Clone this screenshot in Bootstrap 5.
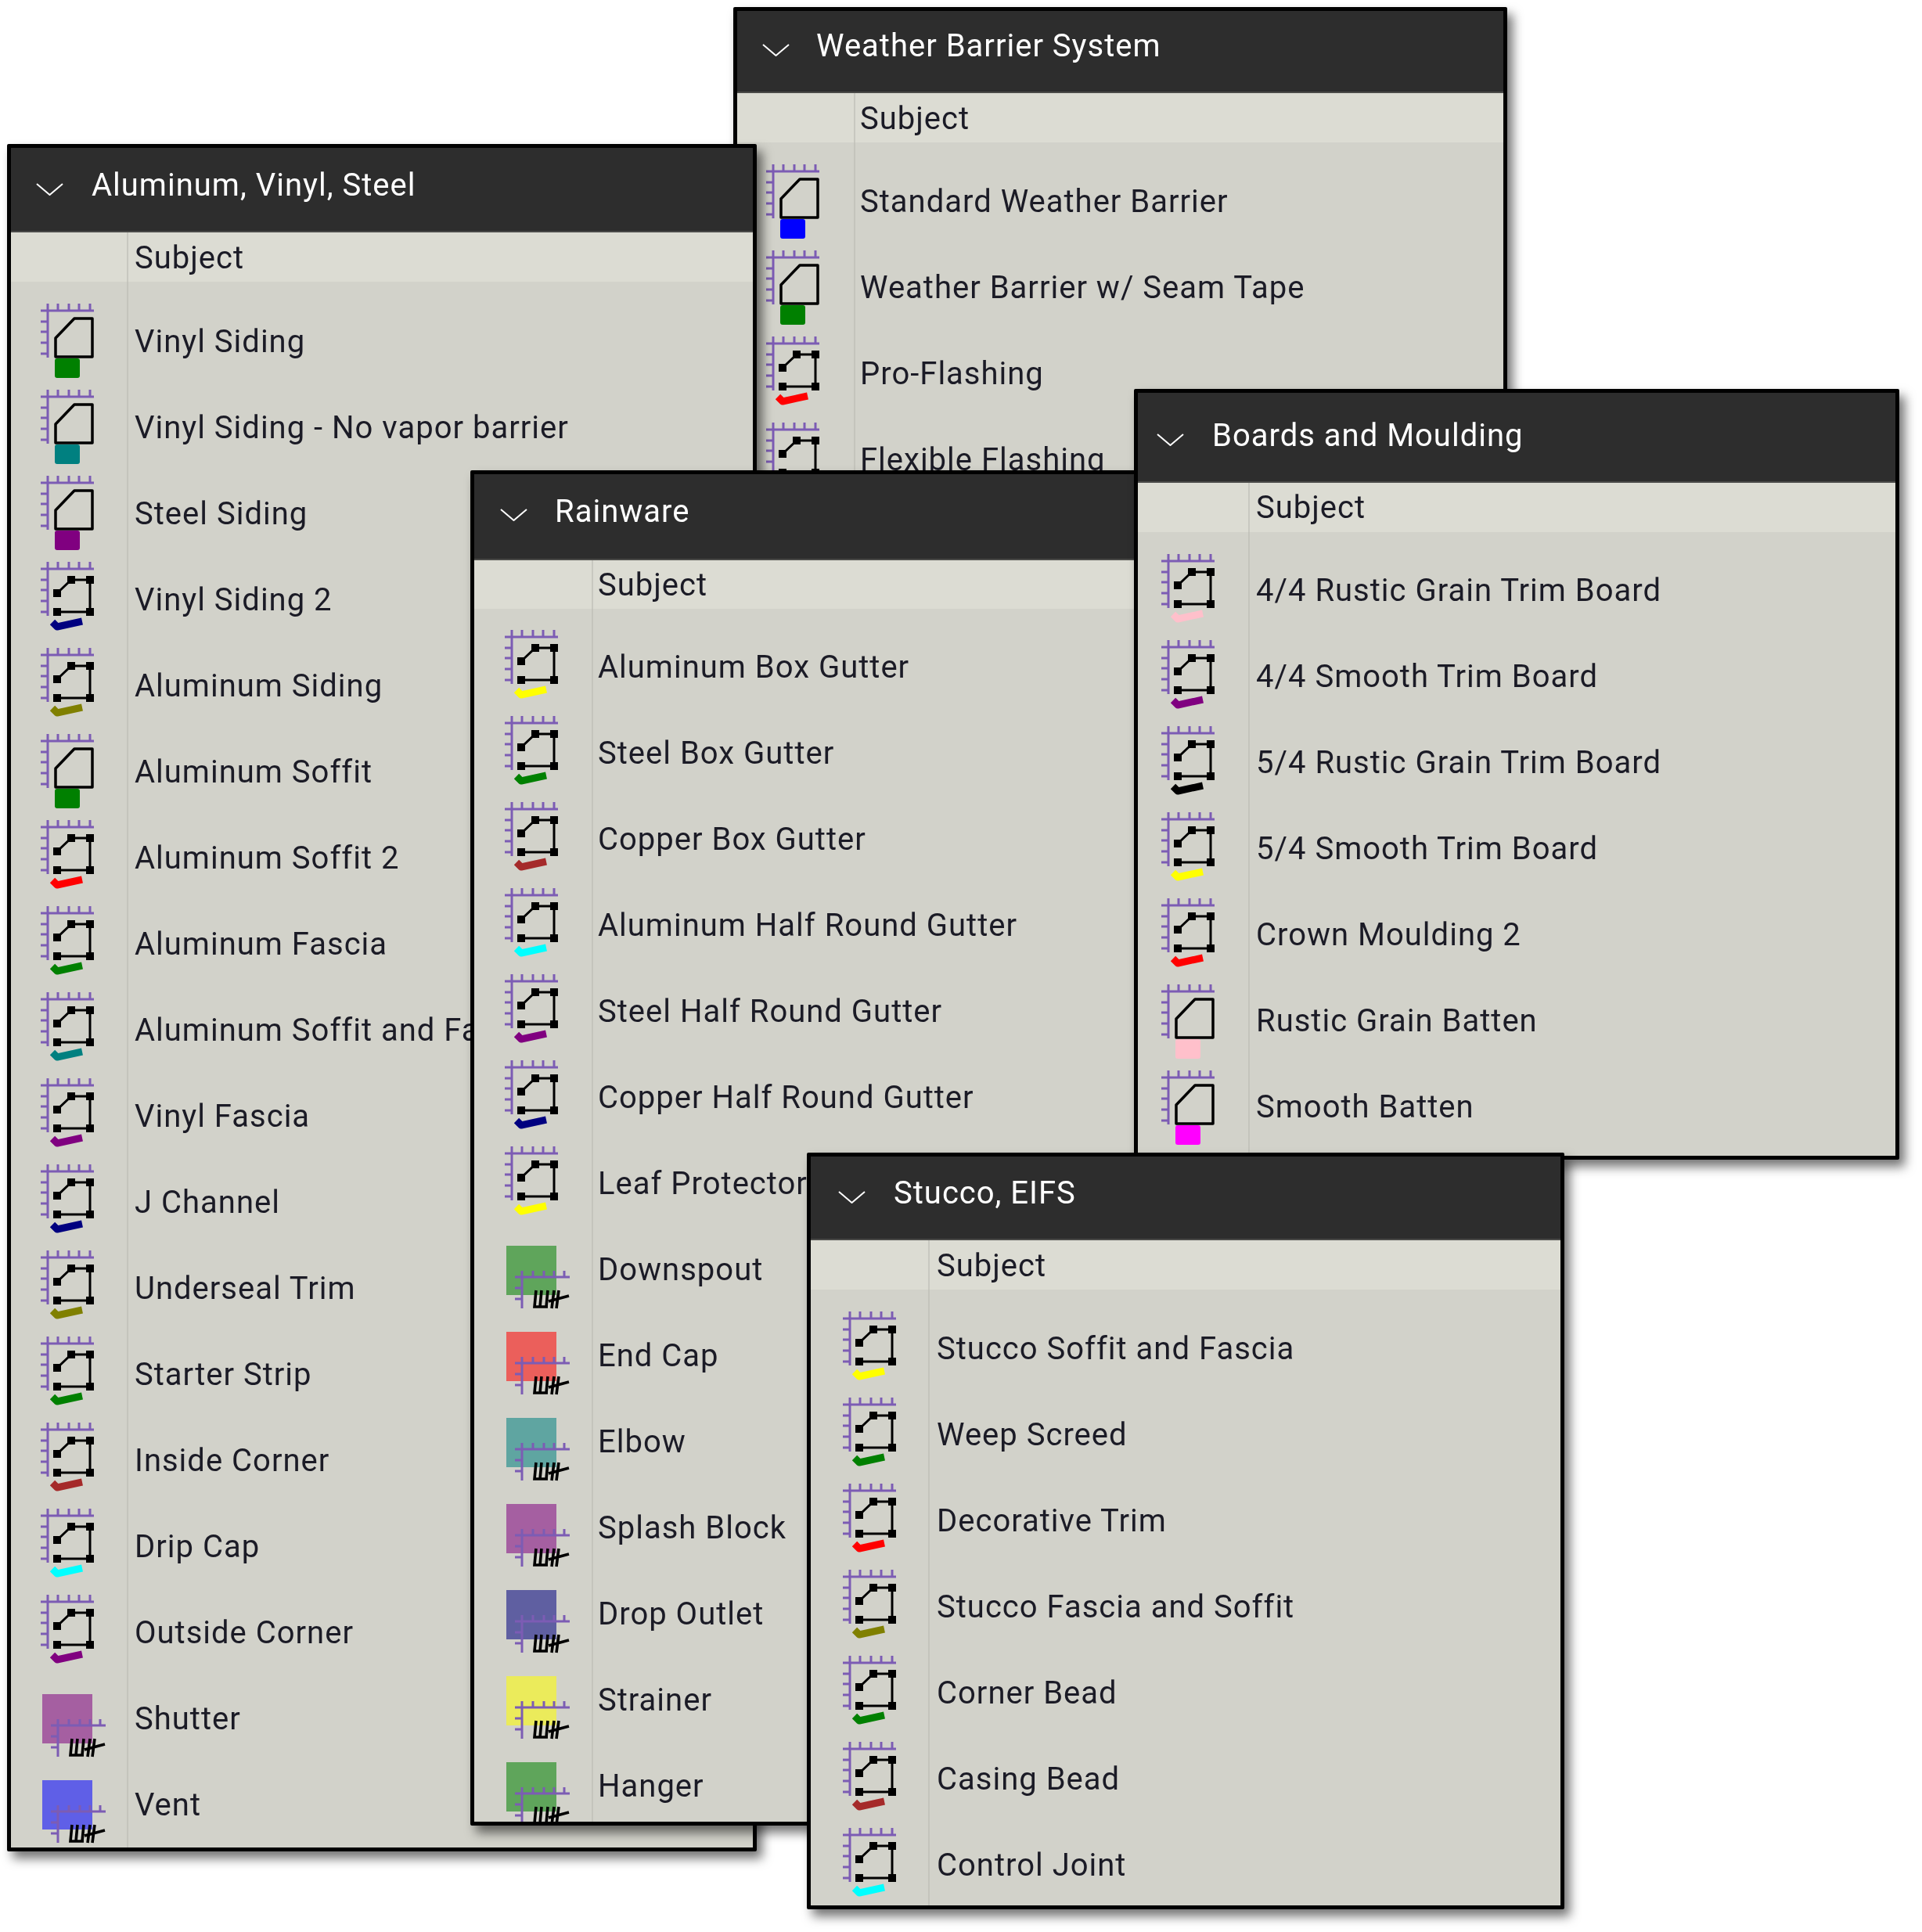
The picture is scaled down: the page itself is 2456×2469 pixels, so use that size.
<!DOCTYPE html>
<html lang="en">
<head>
    <meta charset="UTF-8">
    <title>Tool Sets</title>
    <link href="https://cdn.jsdelivr.net/npm/bootstrap@5.3.0/dist/css/bootstrap.min.css" rel="stylesheet">
    <style>
        body {
            margin: 0;
            background-color: #fff;
            font-family: Roboto, "Liberation Sans", sans-serif;
        }

        .desk {
            position: relative;
            width: 2456px;
            height: 2469px;
            overflow: hidden;
        }

        /* floating tool chest windows */
        .win {
            position: absolute;
            border: 5px solid #000;
            border-radius: 2px;
            background-color: #d2d2ca;
            box-shadow: 7px 9px 14px rgba(0, 0, 0, 0.55);
            overflow: hidden;
            filter: blur(0.5px);
            letter-spacing: 1px;
        }

        .win-weather { left: 937px; top: 9px; width: 989px; height: 700px; --head: 105px; --cols: 63px; --subj: 65px; --ltop: 19px; --drop: 3px; --gut: 149px; --pad: 37px; --hpad: 32px; --hgap: 34px; --hbot: 13px; --tpad: 6px; }
        .win-siding { left: 9px; top: 184px; width: 958px; height: 2182px; --head: 108px; --cols: 63px; --subj: 66px; --ltop: 19px; --drop: 5px; --gut: 148px; --pad: 38px; --hpad: 32px; --hgap: 36px; --hbot: 10px; --tpad: 8px; }
        .win-rain { left: 601px; top: 601px; width: 1000px; height: 1732px; --head: 110px; --cols: 62px; --subj: 64px; --ltop: 18px; --drop: 3px; --gut: 150px; --pad: 39px; --hpad: 33px; --hgap: 35px; --hbot: 13px; --tpad: 6px; }
        .win-boards { left: 1449px; top: 497px; width: 978px; height: 985px; --head: 115px; --cols: 63px; --subj: 64px; --ltop: 19px; --drop: 2px; --gut: 141px; --pad: 30px; --hpad: 24px; --hgap: 36px; --hbot: 3px; --tpad: 8px; }
        .win-stucco { left: 1031px; top: 1473px; width: 968px; height: 967px; --head: 107px; --cols: 63px; --subj: 66px; --ltop: 19px; --drop: 3px; --gut: 150px; --pad: 41px; --hpad: 35px; --hgap: 36px; --hbot: 11px; --tpad: 9px; }

        .win-head {
            height: var(--head);
            flex: none;
            padding: 0 0 var(--hbot) var(--hpad);
            background-color: #2d2d2d;
            border-bottom: 2px solid #4a4a48;
            color: #fff;
            font-size: 40px;
            line-height: 1;
            gap: var(--hgap);
        }

        .win-head svg {
            width: 35px;
            height: 16px;
            margin-top: 9px;
        }

        .win-cols {
            height: var(--cols);
            flex: none;
            background-color: #dcdcd3;
            color: #1b1b26;
            font-size: 40px;
            line-height: var(--subj);
        }

        .win-cols > div:first-child,
        .win-row > div:first-child {
            width: calc(var(--gut) + 2px);
            flex: none;
        }

        .win-cols > div:first-child {
            border-right: 2px solid #c8c8c0;
        }

        .win-cols > div:last-child,
        .win-row > div:last-child {
            padding-left: var(--tpad);
        }

        .win-list {
            padding-top: var(--ltop);
            background: linear-gradient(#c4c4bc, #c4c4bc) no-repeat var(--gut) 0 / 2px 100%, #d2d2ca;
            color: #1b1b26;
            font-size: 40px;
        }

        .win-row {
            height: 110px;
            flex: none;
            white-space: nowrap;
        }

        .win-row > div:first-child {
            padding: 7px 0 0 var(--pad);
        }

        .win-row > div:last-child {
            padding-top: var(--drop);
        }

        .tool-ico {
            display: block;
            width: 90px;
            height: 100px;
            overflow: visible;
        }

        .c-green { color: #008000; }
        .c-teal { color: #008080; }
        .c-purple { color: #800080; }
        .c-navy { color: #000080; }
        .c-olive { color: #808000; }
        .c-red { color: #ff0000; }
        .c-brown { color: #a52a2a; }
        .c-cyan { color: #00ffff; }
        .c-blue { color: #0000ff; }
        .c-yellow { color: #ffff00; }
        .c-pink { color: #ffc0cb; }
        .c-magenta { color: #ff00ff; }
        .c-black { color: #000; }
    </style>
</head>
<body>

    <!-- shared icons, colour comes from currentColor -->
    <svg width="0" height="0" class="position-absolute">
        <defs>
            <symbol id="ruler" overflow="visible">
                <path d="M0 9H68M9 0V69M22 0V9M36 0V9M49 0V9M63 0V9M0 23H9M0 36H9M0 50H9M0 64H9" fill="none" stroke="#7c5cb4" stroke-width="3"/>
            </symbol>
            <symbol id="ico-block" viewBox="0 0 90 100">
                <use href="#ruler"/>
                <rect x="18" y="70" width="32" height="25" rx="3" fill="currentColor"/>
                <path d="M19 44L43 19H66V68H19Z" fill="none" stroke="#000" stroke-width="3.5" stroke-linejoin="round"/>
            </symbol>
            <symbol id="ico-node" viewBox="0 0 90 100">
                <use href="#ruler"/>
                <path d="M15 77L21 83L53 76" fill="none" stroke="currentColor" stroke-width="9" stroke-linejoin="round"/>
                <path d="M21 40L39 23H63V64H21" fill="none" stroke="#000" stroke-width="3"/>
                <path d="M16 35h10v10h-10zM34 18h10v10h-10zM58 18h10v10h-10zM58 59h10v10h-10zM16 59h10v10h-10z" fill="#000"/>
            </symbol>
            <symbol id="ico-hatch" viewBox="0 0 90 100">
                <rect x="2" y="17" width="64" height="63" fill="currentColor" opacity="0.55"/>
                <path d="M13 57H83M22 49V97M36 49V57M50 49V57M63 49V57M76 49V57M13 71H22M13 85H22" fill="none" stroke="#7c5cb4" stroke-width="3"/>
                <path d="M40 74L38 95H55M47 74L45 95M55 74L53 95M63 74L60 97M69 74L66 97M56 88L82 81" fill="none" stroke="#000" stroke-width="3.6"/>
            </symbol>
        </defs>
    </svg>

    <div class="desk">

        <div class="win win-weather d-flex flex-column">
            <div class="win-head d-flex align-items-center">
                <svg viewBox="0 0 35 16"><polyline points="1,1 17.5,15 34,1" fill="none" stroke="#fff" stroke-width="2"/></svg>
                <span>Weather Barrier System</span>
            </div>
            <div class="win-cols d-flex"><div></div><div>Subject</div></div>
            <div class="win-list d-flex flex-column flex-grow-1">
                <div class="win-row d-flex align-items-center"><div class="c-blue"><svg class="tool-ico"><use href="#ico-block"/></svg></div><div>Standard Weather Barrier</div></div>
                <div class="win-row d-flex align-items-center"><div class="c-green"><svg class="tool-ico"><use href="#ico-block"/></svg></div><div>Weather Barrier w/ Seam Tape</div></div>
                <div class="win-row d-flex align-items-center"><div class="c-red"><svg class="tool-ico"><use href="#ico-node"/></svg></div><div>Pro-Flashing</div></div>
                <div class="win-row d-flex align-items-center"><div class="c-green"><svg class="tool-ico"><use href="#ico-node"/></svg></div><div>Flexible Flashing</div></div>
            </div>
        </div>

        <div class="win win-siding d-flex flex-column">
            <div class="win-head d-flex align-items-center">
                <svg viewBox="0 0 35 16"><polyline points="1,1 17.5,15 34,1" fill="none" stroke="#fff" stroke-width="2"/></svg>
                <span>Aluminum, Vinyl, Steel</span>
            </div>
            <div class="win-cols d-flex"><div></div><div>Subject</div></div>
            <div class="win-list d-flex flex-column flex-grow-1">
                <div class="win-row d-flex align-items-center"><div class="c-green"><svg class="tool-ico"><use href="#ico-block"/></svg></div><div>Vinyl Siding</div></div>
                <div class="win-row d-flex align-items-center"><div class="c-teal"><svg class="tool-ico"><use href="#ico-block"/></svg></div><div>Vinyl Siding - No vapor barrier</div></div>
                <div class="win-row d-flex align-items-center"><div class="c-purple"><svg class="tool-ico"><use href="#ico-block"/></svg></div><div>Steel Siding</div></div>
                <div class="win-row d-flex align-items-center"><div class="c-navy"><svg class="tool-ico"><use href="#ico-node"/></svg></div><div>Vinyl Siding 2</div></div>
                <div class="win-row d-flex align-items-center"><div class="c-olive"><svg class="tool-ico"><use href="#ico-node"/></svg></div><div>Aluminum Siding</div></div>
                <div class="win-row d-flex align-items-center"><div class="c-green"><svg class="tool-ico"><use href="#ico-block"/></svg></div><div>Aluminum Soffit</div></div>
                <div class="win-row d-flex align-items-center"><div class="c-red"><svg class="tool-ico"><use href="#ico-node"/></svg></div><div>Aluminum Soffit 2</div></div>
                <div class="win-row d-flex align-items-center"><div class="c-green"><svg class="tool-ico"><use href="#ico-node"/></svg></div><div>Aluminum Fascia</div></div>
                <div class="win-row d-flex align-items-center"><div class="c-teal"><svg class="tool-ico"><use href="#ico-node"/></svg></div><div>Aluminum Soffit and Fascia</div></div>
                <div class="win-row d-flex align-items-center"><div class="c-purple"><svg class="tool-ico"><use href="#ico-node"/></svg></div><div>Vinyl Fascia</div></div>
                <div class="win-row d-flex align-items-center"><div class="c-navy"><svg class="tool-ico"><use href="#ico-node"/></svg></div><div>J Channel</div></div>
                <div class="win-row d-flex align-items-center"><div class="c-olive"><svg class="tool-ico"><use href="#ico-node"/></svg></div><div>Underseal Trim</div></div>
                <div class="win-row d-flex align-items-center"><div class="c-green"><svg class="tool-ico"><use href="#ico-node"/></svg></div><div>Starter Strip</div></div>
                <div class="win-row d-flex align-items-center"><div class="c-brown"><svg class="tool-ico"><use href="#ico-node"/></svg></div><div>Inside Corner</div></div>
                <div class="win-row d-flex align-items-center"><div class="c-cyan"><svg class="tool-ico"><use href="#ico-node"/></svg></div><div>Drip Cap</div></div>
                <div class="win-row d-flex align-items-center"><div class="c-purple"><svg class="tool-ico"><use href="#ico-node"/></svg></div><div>Outside Corner</div></div>
                <div class="win-row d-flex align-items-center"><div class="c-purple"><svg class="tool-ico"><use href="#ico-hatch"/></svg></div><div>Shutter</div></div>
                <div class="win-row d-flex align-items-center"><div class="c-blue"><svg class="tool-ico"><use href="#ico-hatch"/></svg></div><div>Vent</div></div>
            </div>
        </div>

        <div class="win win-rain d-flex flex-column">
            <div class="win-head d-flex align-items-center">
                <svg viewBox="0 0 35 16"><polyline points="1,1 17.5,15 34,1" fill="none" stroke="#fff" stroke-width="2"/></svg>
                <span>Rainware</span>
            </div>
            <div class="win-cols d-flex"><div></div><div>Subject</div></div>
            <div class="win-list d-flex flex-column flex-grow-1">
                <div class="win-row d-flex align-items-center"><div class="c-yellow"><svg class="tool-ico"><use href="#ico-node"/></svg></div><div>Aluminum Box Gutter</div></div>
                <div class="win-row d-flex align-items-center"><div class="c-green"><svg class="tool-ico"><use href="#ico-node"/></svg></div><div>Steel Box Gutter</div></div>
                <div class="win-row d-flex align-items-center"><div class="c-brown"><svg class="tool-ico"><use href="#ico-node"/></svg></div><div>Copper Box Gutter</div></div>
                <div class="win-row d-flex align-items-center"><div class="c-cyan"><svg class="tool-ico"><use href="#ico-node"/></svg></div><div>Aluminum Half Round Gutter</div></div>
                <div class="win-row d-flex align-items-center"><div class="c-purple"><svg class="tool-ico"><use href="#ico-node"/></svg></div><div>Steel Half Round Gutter</div></div>
                <div class="win-row d-flex align-items-center"><div class="c-navy"><svg class="tool-ico"><use href="#ico-node"/></svg></div><div>Copper Half Round Gutter</div></div>
                <div class="win-row d-flex align-items-center"><div class="c-yellow"><svg class="tool-ico"><use href="#ico-node"/></svg></div><div>Leaf Protector</div></div>
                <div class="win-row d-flex align-items-center"><div class="c-green"><svg class="tool-ico"><use href="#ico-hatch"/></svg></div><div>Downspout</div></div>
                <div class="win-row d-flex align-items-center"><div class="c-red"><svg class="tool-ico"><use href="#ico-hatch"/></svg></div><div>End Cap</div></div>
                <div class="win-row d-flex align-items-center"><div class="c-teal"><svg class="tool-ico"><use href="#ico-hatch"/></svg></div><div>Elbow</div></div>
                <div class="win-row d-flex align-items-center"><div class="c-purple"><svg class="tool-ico"><use href="#ico-hatch"/></svg></div><div>Splash Block</div></div>
                <div class="win-row d-flex align-items-center"><div class="c-navy"><svg class="tool-ico"><use href="#ico-hatch"/></svg></div><div>Drop Outlet</div></div>
                <div class="win-row d-flex align-items-center"><div class="c-yellow"><svg class="tool-ico"><use href="#ico-hatch"/></svg></div><div>Strainer</div></div>
                <div class="win-row d-flex align-items-center"><div class="c-green"><svg class="tool-ico"><use href="#ico-hatch"/></svg></div><div>Hanger</div></div>
            </div>
        </div>

        <div class="win win-boards d-flex flex-column">
            <div class="win-head d-flex align-items-center">
                <svg viewBox="0 0 35 16"><polyline points="1,1 17.5,15 34,1" fill="none" stroke="#fff" stroke-width="2"/></svg>
                <span>Boards and Moulding</span>
            </div>
            <div class="win-cols d-flex"><div></div><div>Subject</div></div>
            <div class="win-list d-flex flex-column flex-grow-1">
                <div class="win-row d-flex align-items-center"><div class="c-pink"><svg class="tool-ico"><use href="#ico-node"/></svg></div><div>4/4 Rustic Grain Trim Board</div></div>
                <div class="win-row d-flex align-items-center"><div class="c-purple"><svg class="tool-ico"><use href="#ico-node"/></svg></div><div>4/4 Smooth Trim Board</div></div>
                <div class="win-row d-flex align-items-center"><div class="c-black"><svg class="tool-ico"><use href="#ico-node"/></svg></div><div>5/4 Rustic Grain Trim Board</div></div>
                <div class="win-row d-flex align-items-center"><div class="c-yellow"><svg class="tool-ico"><use href="#ico-node"/></svg></div><div>5/4 Smooth Trim Board</div></div>
                <div class="win-row d-flex align-items-center"><div class="c-red"><svg class="tool-ico"><use href="#ico-node"/></svg></div><div>Crown Moulding 2</div></div>
                <div class="win-row d-flex align-items-center"><div class="c-pink"><svg class="tool-ico"><use href="#ico-block"/></svg></div><div>Rustic Grain Batten</div></div>
                <div class="win-row d-flex align-items-center"><div class="c-magenta"><svg class="tool-ico"><use href="#ico-block"/></svg></div><div>Smooth Batten</div></div>
            </div>
        </div>

        <div class="win win-stucco d-flex flex-column">
            <div class="win-head d-flex align-items-center">
                <svg viewBox="0 0 35 16"><polyline points="1,1 17.5,15 34,1" fill="none" stroke="#fff" stroke-width="2"/></svg>
                <span>Stucco, EIFS</span>
            </div>
            <div class="win-cols d-flex"><div></div><div>Subject</div></div>
            <div class="win-list d-flex flex-column flex-grow-1">
                <div class="win-row d-flex align-items-center"><div class="c-yellow"><svg class="tool-ico"><use href="#ico-node"/></svg></div><div>Stucco Soffit and Fascia</div></div>
                <div class="win-row d-flex align-items-center"><div class="c-green"><svg class="tool-ico"><use href="#ico-node"/></svg></div><div>Weep Screed</div></div>
                <div class="win-row d-flex align-items-center"><div class="c-red"><svg class="tool-ico"><use href="#ico-node"/></svg></div><div>Decorative Trim</div></div>
                <div class="win-row d-flex align-items-center"><div class="c-olive"><svg class="tool-ico"><use href="#ico-node"/></svg></div><div>Stucco Fascia and Soffit</div></div>
                <div class="win-row d-flex align-items-center"><div class="c-green"><svg class="tool-ico"><use href="#ico-node"/></svg></div><div>Corner Bead</div></div>
                <div class="win-row d-flex align-items-center"><div class="c-brown"><svg class="tool-ico"><use href="#ico-node"/></svg></div><div>Casing Bead</div></div>
                <div class="win-row d-flex align-items-center"><div class="c-cyan"><svg class="tool-ico"><use href="#ico-node"/></svg></div><div>Control Joint</div></div>
            </div>
        </div>

    </div>

    <script src="https://cdn.jsdelivr.net/npm/bootstrap@5.3.0/dist/js/bootstrap.bundle.min.js"></script>
</body>
</html>
